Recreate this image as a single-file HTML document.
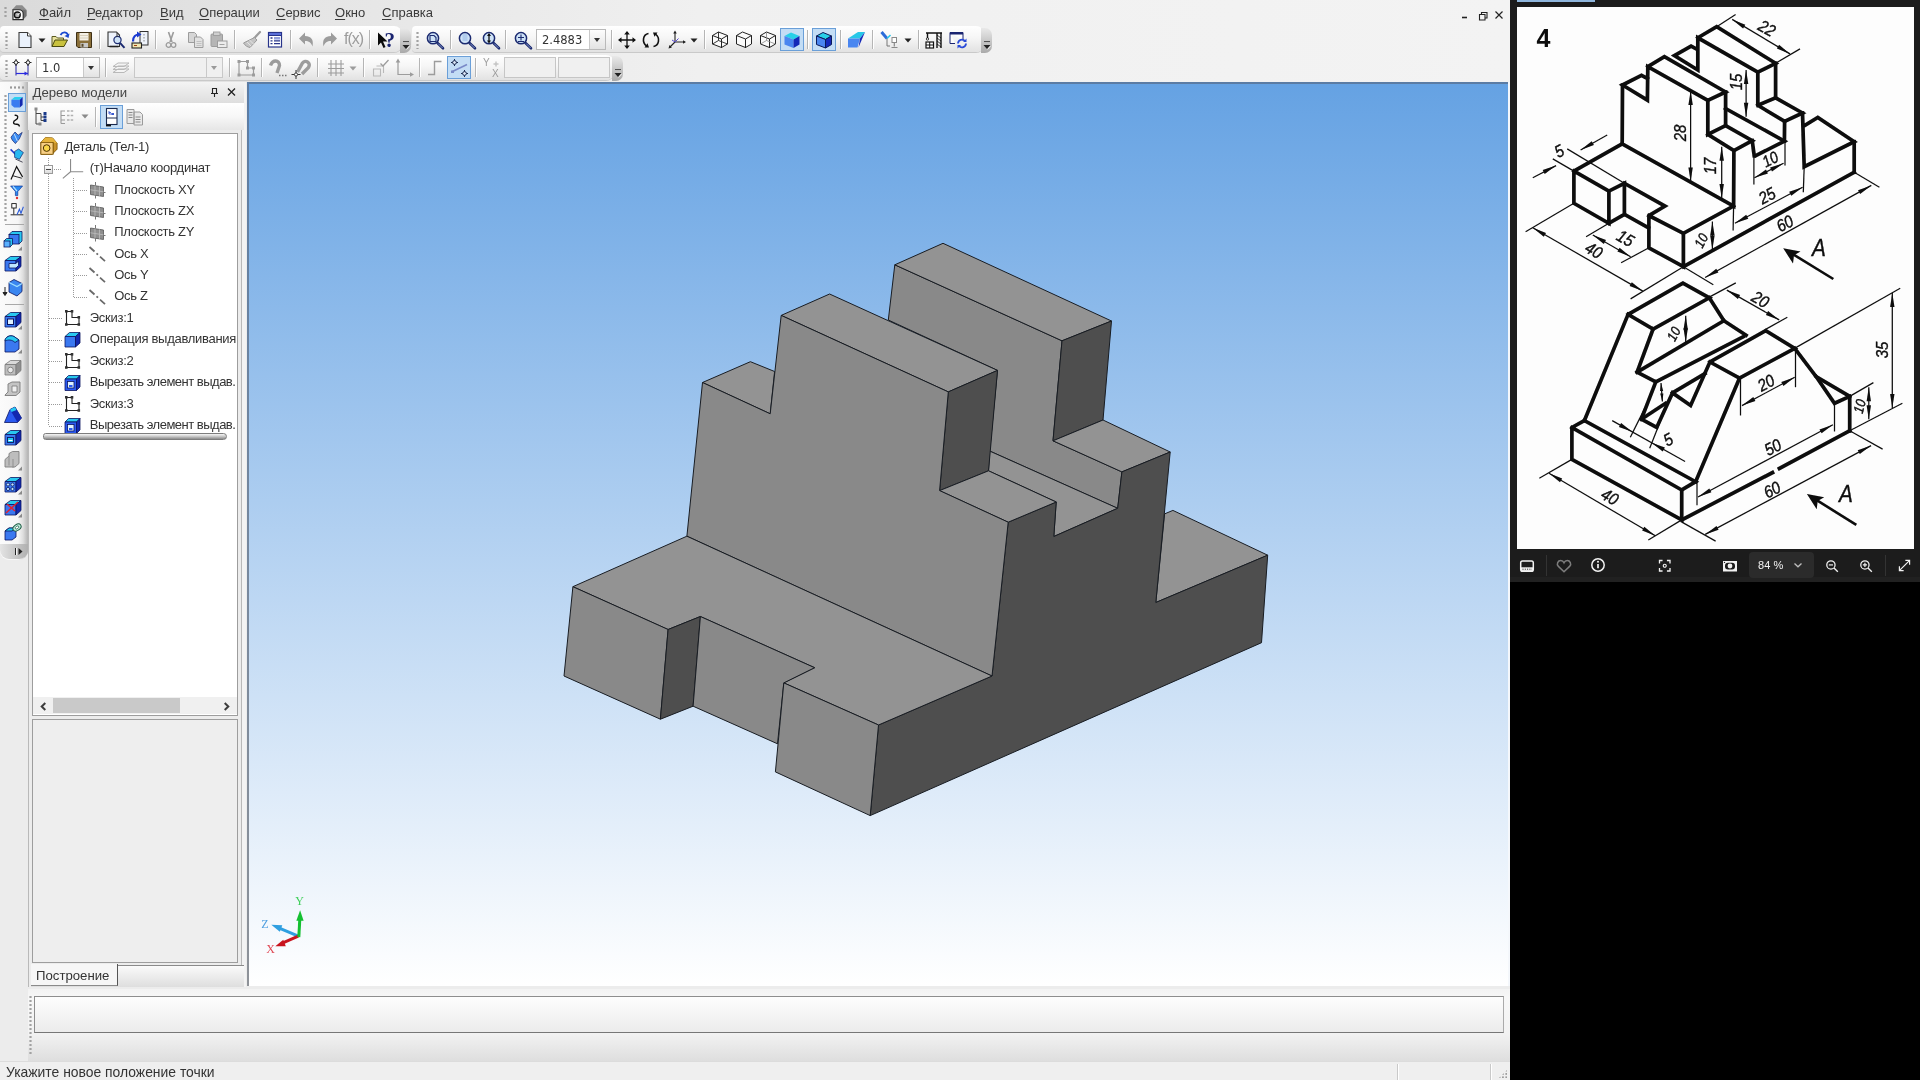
<!DOCTYPE html>
<html lang="ru">
<head>
<meta charset="utf-8">
<title>КОМПАС-3D</title>
<style>
*{box-sizing:border-box;margin:0;padding:0}
html,body{width:1920px;height:1080px;overflow:hidden;background:#000}
body{position:relative;font-family:"Liberation Sans","DejaVu Sans",sans-serif;font-size:13px;color:#2a2a2a}
.abs{position:absolute}
svg{overflow:visible}
#cad{will-change:transform;position:absolute;left:0;top:0;width:1510px;height:1080px;background:#ececec;overflow:hidden}
#menubar{position:absolute;left:0;top:0;width:1510px;height:82px;background:linear-gradient(90deg,#dadada 0,#e5e5e5 300px,#f0f0f0 700px,#f3f3f3 100%)}
#menubar span{position:absolute;top:5px;font-size:13px;line-height:15px;color:#3a3a3a;white-space:nowrap}
#menubar span u{text-decoration:underline;text-underline-offset:2px}
.grip{position:absolute;width:3px;background-image:radial-gradient(circle,#a2a2a2 1px,transparent 1.3px);background-size:3px 4px}
.tb{position:absolute;height:27px;border-radius:4px 8px 8px 4px;background:linear-gradient(180deg,#ffffff 0,#f6f6f6 45%,#e2e2e2 100%);box-shadow:0 1px 0 #c9c9c9}
.tbend{position:absolute;top:2px;width:11px;height:25px;border-radius:0 7px 7px 0;background:linear-gradient(180deg,#e9e9e9 0,#a9a9a9 100%)}
.sep{position:absolute;width:1px;height:19px;background:#b5b5b5;box-shadow:1px 0 0 #fff}
.ico{position:absolute;width:20px;height:20px}
.combo{position:absolute;height:21px;background:#fff;border:1px solid #b9b9b9;font-family:"DejaVu Sans","Liberation Sans",sans-serif;font-size:11.5px;line-height:21px;padding-left:5px;color:#333}
.combo.dis{background:#f0f0f0;border-color:#c8c8c8}
.cbtn{position:absolute;right:0;top:0;width:16px;height:19px;border-left:1px solid #c9c9c9;background:linear-gradient(180deg,#fdfdfd,#e3e3e3)}
.cbtn:after,.dd:after{content:"";position:absolute;left:4px;top:8px;border:3.5px solid transparent;border-top:4px solid #333}
.combo.dis .cbtn:after{border-top-color:#9a9a9a}
.dd{position:absolute;width:12px;height:20px}
.dd:after{left:2px;top:9px}
#lefttb{position:absolute;left:0;top:82px;width:28px;height:478px;background:linear-gradient(90deg,#fbfbfb 0,#f6f6f6 18px,#dedede 23px,#b4b4b4 28px);border-radius:0 0 9px 9px}
#panel{position:absolute;left:28px;top:82px;width:218px;height:905px;background:#ececec}
#ptitle{position:absolute;left:0;top:0;width:216px;height:21px;background:linear-gradient(180deg,#f4f4f4,#dedede);font-size:13.2px;line-height:21px;color:#444;padding-left:4.500px}
#tree{position:absolute;left:4px;top:51px;width:206px;height:583px;background:#fff;border:1px solid #9d9d9d;overflow:hidden}
.tr{position:absolute;left:0;height:21px;font-size:13px;letter-spacing:-0.28px;line-height:21px;white-space:nowrap;color:#333}
#lower{position:absolute;left:4px;top:637px;width:206px;height:243.5px;background:#eeeeee;border:1px solid #9d9d9d}
#vp{position:absolute;left:249px;top:84px;width:1259px;height:901.5px;background:linear-gradient(180deg,#65a2e3 0,#ffffff 100%);overflow:hidden}
#vpb{position:absolute;left:247px;top:82px;width:1261px;height:903.5px;background:linear-gradient(180deg,#5b7ca4 0,#8e9298 100%)}
#bottom{position:absolute;left:28px;top:989px;width:1482px;height:72px;background:linear-gradient(180deg,#f3f3f3 0,#f7f7f7 12%,#f2f2f2 62%,#dedede 100%)}
#prop{position:absolute;left:6px;top:7px;width:1470px;height:37px;border:1px solid #8e8e8e;border-right-color:#aaa;border-bottom-color:#777;background:linear-gradient(180deg,#fdfdfd,#ececec)}
#status{position:absolute;left:0;top:1061px;width:1510px;height:19px;background:#efefef;border-top:1px solid #dcdcdc;font-size:13.9px;line-height:20px;color:#333;padding-left:6px}
#viewer{will-change:transform;position:absolute;left:1510px;top:0;width:410px;height:582px;background:#1c1c1c}
#paper{position:absolute;left:7px;top:7px;width:397px;height:541.5px;background:#fdfdfd;overflow:hidden}
</style>
</head>
<body>
<div id="cad">
<div id="menubar">
<div class="grip" style="left:4px;top:6px;height:12px"></div>
<svg class="abs" style="left:11px;top:4px" width="18" height="18" viewBox="11 4 18 18"><path d="M12.6 9.200l3.600-3.900h6l4.500 4.600v6.200l-3.900 4h-10.200z" fill="#8d8d8d"/><path d="M22.800 9.500l3.500 1v5.300l-3.300 3.600z" fill="#6f6f6f"/><path d="M13 9.700h6a4.200 4.200 0 0 1 4.200 4.200v5.700h-10.200z" fill="#fbfbfb" stroke="#2a2a2a" stroke-width="1.100"/><circle cx="17.300" cy="14.900" r="2.900" fill="#b5b5b5" stroke="#111" stroke-width="1.400"/><path d="M17.500 14.700l2.300-1.200" stroke="#fff" stroke-width="1"/></svg>
<span style="left:39px"><u>Ф</u>айл</span>
<span style="left:87px"><u>Р</u>едактор</span>
<span style="left:160px"><u>В</u>ид</span>
<span style="left:199px"><u>О</u>перации</span>
<span style="left:276px"><u>С</u>ервис</span>
<span style="left:335px"><u>О</u>кно</span>
<span style="left:382px"><u>С</u>правка</span>
<svg class="abs" style="left:1458px;top:8px" width="52" height="16" viewBox="0 0 52 16"><path d="M4 9.5h5" stroke="#222" stroke-width="1.6"/><path d="M21.5 6.5h5.5v5.5h-5.5z M23.5 6.5v-2h5.5v5.5h-2" fill="none" stroke="#222" stroke-width="1.1"/><path d="M37.5 3.5l7 7M44.5 3.5l-7 7" stroke="#222" stroke-width="1.2"/></svg>
</div>
<div class="tb" style="left:0;top:26px;width:402px;height:26px"></div>
<div class="tb" style="left:412px;top:26px;width:572px;height:26px"></div>
<div class="tb" style="left:0;top:55px;width:614px;height:25px"></div>
<div class="tbend" style="left:400px;top:28px"></div>
<svg class="abs" style="left:402px;top:41px" width="8" height="9" viewBox="0 0 8 9"><path d="M1 1.5h6" stroke="#fff" stroke-width="1"/><path d="M1 0.8h6" stroke="#222" stroke-width="1"/><path d="M0.5 4h7L4 8z" fill="#222"/><path d="M4.6 8.4 L7.9 4.6" stroke="#fff" stroke-width=".8"/></svg>
<div class="tbend" style="left:981px;top:28px"></div>
<svg class="abs" style="left:983px;top:41px" width="8" height="9" viewBox="0 0 8 9"><path d="M1 1.5h6" stroke="#fff" stroke-width="1"/><path d="M1 0.8h6" stroke="#222" stroke-width="1"/><path d="M0.5 4h7L4 8z" fill="#222"/><path d="M4.6 8.4 L7.9 4.6" stroke="#fff" stroke-width=".8"/></svg>
<div class="tbend" style="left:612px;top:56px"></div>
<svg class="abs" style="left:614px;top:69px" width="8" height="9" viewBox="0 0 8 9"><path d="M1 1.5h6" stroke="#fff" stroke-width="1"/><path d="M1 0.8h6" stroke="#222" stroke-width="1"/><path d="M0.5 4h7L4 8z" fill="#222"/><path d="M4.6 8.4 L7.9 4.6" stroke="#fff" stroke-width=".8"/></svg>
<div class="grip" style="left:5px;top:31px;height:18px"></div>
<div class="grip" style="left:416px;top:31px;height:18px"></div>
<div class="grip" style="left:5px;top:59px;height:18px"></div>
<svg class="abs" style="left:14.5px;top:29.5px" width="20" height="20" viewBox="-10 -10 20 20"><path d="M-6 -7.5h8.5l3.5 3.5v11.5h-12z" fill="#eaf1fb" stroke="#3a3a3a" stroke-width="1.1"/><path d="M2.5 -7.5v3.5h3.5" fill="#fff" stroke="#3a3a3a" stroke-width="1"/></svg>
<svg class="abs" style="left:38px;top:37.5px" width="8" height="5" viewBox="0 0 8 5"><path d="M0.5 0.5h7L4 4.5z" fill="#222"/></svg>
<svg class="abs" style="left:50.0px;top:29.5px" width="20" height="20" viewBox="-10 -10 20 20"><path d="M-8 6.5v-10h4l1.5 1.5h6v3" fill="#e8e2a0" stroke="#5a5a20" stroke-width="1"/><path d="M-8 6.5l3-6.5h12.5l-3.5 6.5z" fill="#c9c23e" stroke="#4a4a10" stroke-width="1"/><path d="M0.5 -5c2-3.5 6-3.5 7.5 0" fill="none" stroke="#1a4ad0" stroke-width="1.8"/><path d="M9.5 -6.5l-1 4.5-4-2z" fill="#1a4ad0"/></svg>
<svg class="abs" style="left:73.5px;top:29.5px" width="20" height="20" viewBox="-10 -10 20 20"><path d="M-7.5 -7.5h15v15h-13.5l-1.5-1.5z" fill="#8a6f3a" stroke="#3e3016" stroke-width="1"/><rect x="-4.5" y="-7" width="9" height="7.5" fill="#f4f0e6"/><path d="M-4.5 -4.5h9M-4.5 -2h9" stroke="#cfc7b0" stroke-width=".8"/><rect x="-3.5" y="3" width="7.5" height="4.5" fill="#c9c9c9"/><rect x="-2.5" y="3.8" width="2" height="3" fill="#5a4a2a"/></svg>
<div class="sep" style="left:99px;top:30px"></div>
<svg class="abs" style="left:105.5px;top:29.5px" width="20" height="20" viewBox="-10 -10 20 20"><path d="M-8 -8h8.5l3 3v11.5h-11.5z" fill="#eef3fb" stroke="#333" stroke-width="1.1"/><path d="M-6.5 6.5h9" stroke="#222" stroke-width="1.6"/><circle cx="1.5" cy="0" r="3.6" fill="#cfe3f7" stroke="#1b2a70" stroke-width="1.2"/><path d="M4 2.8l4.5 5" stroke="#1b2a70" stroke-width="2"/><path d="M1 -7v4" stroke="#333" stroke-width="1"/></svg>
<svg class="abs" style="left:129.5px;top:29.5px" width="20" height="20" viewBox="-10 -10 20 20"><rect x="0" y="-8.5" width="8" height="13.5" fill="#eef3fb" stroke="#333" stroke-width="1"/><path d="M4 -6v8" stroke="#8a8a8a" stroke-width="1" stroke-dasharray="1.5 1.5"/><path d="M-7 1.5c0-5 3-7 6-7" fill="none" stroke="#1a3ad0" stroke-width="2.2"/><path d="M-3 -8.5l4.5 3-4.5 3z" fill="#1a3ad0"/><rect x="-8" y="3" width="9.5" height="5" fill="#f0e6b0" stroke="#222" stroke-width="1.1"/><path d="M-6 5.5h3" stroke="#a04010" stroke-width="1"/></svg>
<div class="sep" style="left:155px;top:30px"></div>
<svg class="abs" style="left:161.0px;top:29.5px" width="20" height="20" viewBox="-10 -10 20 20"><path d="M-2.5 -8l3.5 10M2.5 -8l-3.5 10" stroke="#9c9c9c" stroke-width="1.6"/><circle cx="-2.5" cy="5" r="2.3" fill="none" stroke="#9c9c9c" stroke-width="1.3"/><circle cx="2.5" cy="5" r="2.3" fill="none" stroke="#9c9c9c" stroke-width="1.3"/></svg>
<svg class="abs" style="left:186.0px;top:29.5px" width="20" height="20" viewBox="-10 -10 20 20"><path d="M-7.5 -7.5h6l2 2v8h-8z" fill="#d6d6d6" stroke="#9c9c9c" stroke-width="1"/><path d="M-1.5 -3h6l2.500 2.500v8h-8.500z" fill="#e2e2e2" stroke="#9c9c9c" stroke-width="1"/><path d="M0.500 1.500h5M0.500 3.500h5M0.500 5.500h5" stroke="#b9b9b9" stroke-width=".8"/></svg>
<svg class="abs" style="left:208.5px;top:29.5px" width="20" height="20" viewBox="-10 -10 20 20"><rect x="-8" y="-6" width="11.5" height="12.5" rx="1" fill="#b5b5b5" stroke="#9c9c9c" stroke-width="1"/><rect x="-5.5" y="-8" width="6.500" height="3.500" fill="#cfcfcf" stroke="#9c9c9c" stroke-width=".9"/><rect x="-1.500" y="1" width="9.500" height="6.500" fill="#ececec" stroke="#9c9c9c" stroke-width="1"/><path d="M0.500 4.500h5" stroke="#9c9c9c" stroke-width=".9"/></svg>
<div class="sep" style="left:234px;top:30px"></div>
<svg class="abs" style="left:241.5px;top:29.5px" width="20" height="20" viewBox="-10 -10 20 20"><path d="M8 -8l-6.500 7" stroke="#9c9c9c" stroke-width="2.200" stroke-linecap="round"/><path d="M2.500 -2.500l2.500 2.500-7 7.500c-2.500-.5-4.500-1.500-6.500-4.500z" fill="#c4c4c4" stroke="#9c9c9c" stroke-width="1"/><path d="M-5 2l4 4M-2.500 0l4 4" stroke="#e8e8e8" stroke-width=".9"/></svg>
<svg class="abs" style="left:264.5px;top:29.5px" width="20" height="20" viewBox="-10 -10 20 20"><rect x="-6.500" y="-7.500" width="13" height="14.500" fill="#fff" stroke="#28348a" stroke-width="1.200"/><rect x="-6.500" y="-7.500" width="13" height="3" fill="#5a6ed8" stroke="#28348a" stroke-width="1"/><path d="M-4.500 -2h2M-4.500 0.800h2M-4.500 3.600h2M-1 -2h6M-1 0.800h6M-1 3.600h6" stroke="#28348a" stroke-width="1.300"/><rect x="-1" y="-3" width="6" height="3" fill="#aab6f0" opacity=".7"/></svg>
<div class="sep" style="left:290px;top:30px"></div>
<svg class="abs" style="left:297.0px;top:29.5px" width="20" height="20" viewBox="-10 -10 20 20"><path d="M-8 -1.500l6-6v3.500c6 0 9 3.500 7.500 10.500-1.500-4-3.500-5.500-7.500-5.500v3.500z" fill="#9c9c9c"/></svg>
<svg class="abs" style="left:319.0px;top:29.5px" width="20" height="20" viewBox="-10 -10 20 20"><path d="M8 -1.500l-6-6v3.500c-6 0-9 3.500-7.500 10.500 1.500-4 3.500-5.500 7.500-5.500v3.500z" fill="#9c9c9c"/></svg>
<div class="abs" style="left:344px;top:30px;font-size:16px;line-height:18px;color:#9c9c9c;letter-spacing:-1px">f(x)</div>
<div class="sep" style="left:369px;top:30px"></div>
<svg class="abs" style="left:375.5px;top:29.5px" width="20" height="20" viewBox="-10 -10 20 20"><path d="M-8 -7.500v13l3-3 2.500 5.500 2-1-2.500-5.500h4.500z" fill="#0a0a0a"/><text x="-1.500" y="6.500" font-family="Liberation Serif,serif" font-weight="bold" font-size="21" fill="#1a2470">?</text></svg>
<svg class="abs" style="left:424.5px;top:29.5px" width="20" height="20" viewBox="-10 -10 20 20"><path d="M2.5 3 L8 8.3" stroke="#1b2a70" stroke-width="2.6" stroke-linecap="round"/><path d="M3.2 3.6 L7.6 8" stroke="#8f9fd0" stroke-width=".9"/><circle cx="-2" cy="-1.8" r="5.6" fill="#cfe3f7" stroke="#1b2a70" stroke-width="1.5"/><path d="M-5 -4.500h4l2 2v4h-6z" fill="none" stroke="#1b2a70" stroke-width="1.100"/></svg>
<div class="sep" style="left:450px;top:30px"></div>
<svg class="abs" style="left:456.5px;top:29.5px" width="20" height="20" viewBox="-10 -10 20 20"><path d="M2.5 3 L8 8.3" stroke="#1b2a70" stroke-width="2.6" stroke-linecap="round"/><path d="M3.2 3.6 L7.6 8" stroke="#8f9fd0" stroke-width=".9"/><circle cx="-2" cy="-1.8" r="5.6" fill="#cfe3f7" stroke="#1b2a70" stroke-width="1.5"/><rect x="-4.500" y="-6" width="5" height="7" fill="#a9c6ea" opacity=".8"/></svg>
<svg class="abs" style="left:480.5px;top:29.5px" width="20" height="20" viewBox="-10 -10 20 20"><path d="M2.5 3 L8 8.3" stroke="#1b2a70" stroke-width="2.6" stroke-linecap="round"/><path d="M3.2 3.6 L7.6 8" stroke="#8f9fd0" stroke-width=".9"/><circle cx="-2" cy="-1.8" r="5.6" fill="#cfe3f7" stroke="#1b2a70" stroke-width="1.5"/><path d="M-2 -5.500v7.500" stroke="#111" stroke-width="1.300"/><path d="M-2 -7l2 3h-4zM-2 3.500l2-3h-4z" fill="#111"/></svg>
<div class="sep" style="left:505px;top:30px"></div>
<svg class="abs" style="left:512.5px;top:29.5px" width="20" height="20" viewBox="-10 -10 20 20"><path d="M2.5 3 L8 8.3" stroke="#1b2a70" stroke-width="2.6" stroke-linecap="round"/><path d="M3.2 3.6 L7.6 8" stroke="#8f9fd0" stroke-width=".9"/><circle cx="-2" cy="-1.8" r="5.6" fill="#cfe3f7" stroke="#1b2a70" stroke-width="1.5"/><path d="M-5 -2.500h6M-2 -5.500v6M-5 1.500h6" stroke="#1b2a70" stroke-width="1.100"/></svg>
<div class="combo" style="left:536px;top:29px;width:70px">2.4883<div class="cbtn"></div></div>
<div class="sep" style="left:611px;top:30px"></div>
<svg class="abs" style="left:617.0px;top:29.5px" width="20" height="20" viewBox="-10 -10 20 20"><path d="M-8 0h16M0 -8v16" stroke="#111" stroke-width="1.300"/><path d="M-9 0l3.500-2.800v5.600zM9 0l-3.500-2.800v5.600zM0 -9l-2.800 3.500h5.600zM0 9l-2.800-3.500h5.600z" fill="#111"/></svg>
<svg class="abs" style="left:641.0px;top:29.5px" width="20" height="20" viewBox="-10 -10 20 20"><path d="M-2.500 -6.500c-5.500 1-7 8.500-2 12.500" fill="none" stroke="#111" stroke-width="1.600"/><path d="M2.500 6.500c5.500-1 7-8.500 2-12.500" fill="none" stroke="#111" stroke-width="1.600"/><path d="M-6.500 7.500l4.500 0-1.500-4.300z M6.500 -7.500l-4.500 0 1.500 4.300z" fill="#111"/></svg>
<svg class="abs" style="left:667.0px;top:29.5px" width="20" height="20" viewBox="-10 -10 20 20"><path d="M-2 2v-10M-2 2h9.500M-2 2l-5.500 5.500" stroke="#222" stroke-width="1.100" fill="none"/><path d="M-2 -9.500l-1.800 3h3.600zM9 2l-3-1.800v3.600zM-8.500 8.500l1-3.400 2.400 2.400z" fill="#222"/><path d="M-2 2l3.500-3.500M-2 2l-3 -2" stroke="#5a4ad0" stroke-width="1"/></svg>
<svg class="abs" style="left:690px;top:37.5px" width="8" height="5" viewBox="0 0 8 5"><path d="M0.5 0.5h7L4 4.5z" fill="#222"/></svg>
<div class="sep" style="left:704px;top:30px"></div>
<svg class="abs" style="left:710.0px;top:29.5px" width="20" height="20" viewBox="-10 -10 20 20"><path d="M-7.500 -4.500l6-3.500 9 3.500v8.500l-6 3.500-9-3.500z" fill="#fbfbfb" stroke="#222" stroke-width="1"/><path d="M-7.500 -4.500l9 3.500 6-3.500M1.500 -1v9" fill="none" stroke="#222" stroke-width="1"/><path d="M-1.500 -8v8.500l-6 3.500M-1.500 0.500l9 3.500" fill="none" stroke="#222" stroke-width=".9"/></svg>
<svg class="abs" style="left:734.0px;top:29.5px" width="20" height="20" viewBox="-10 -10 20 20"><path d="M-7.500 -4.500l6-3.500 9 3.500v8.500l-6 3.500-9-3.500z" fill="#fbfbfb" stroke="#222" stroke-width="1"/><path d="M-7.500 -4.500l9 3.500 6-3.500M1.500 -1v9" fill="none" stroke="#222" stroke-width="1"/></svg>
<svg class="abs" style="left:758.0px;top:29.5px" width="20" height="20" viewBox="-10 -10 20 20"><path d="M-7.500 -4.500l6-3.500 9 3.500v8.500l-6 3.500-9-3.500z" fill="#fbfbfb" stroke="#222" stroke-width="1"/><path d="M-7.500 -4.500l9 3.500 6-3.500M1.500 -1v9" fill="none" stroke="#222" stroke-width="1"/><path d="M-1.500 -8v8.500l-6 3.500M-1.500 0.500l9 3.500" fill="none" stroke="#888" stroke-width=".8"/></svg>
<div class="abs" style="left:780px;top:28px;width:24px;height:23px;background:#c3ddf5;border:1px solid #6a9fd8"></div>
<svg class="abs" style="left:782.0px;top:29.5px" width="20" height="20" viewBox="-10 -10 20 20"><path d="M-7.500 -4l6.500-3.500 8.500 3.500-6 3.500z" fill="#28d0e8"/><path d="M-7.500 -4l9 3.500v8.500l-9-3.500z" fill="#4a86f0"/><path d="M1.500 -0.500l6-3.500v8.500l-6 3.500z" fill="#1428b8"/></svg>
<div class="sep" style="left:807px;top:30px"></div>
<div class="abs" style="left:812px;top:28px;width:24px;height:23px;background:#c3ddf5;border:1px solid #6a9fd8"></div>
<svg class="abs" style="left:814.0px;top:29.5px" width="20" height="20" viewBox="-10 -10 20 20"><path d="M-7.500 -4l6.500-3.500 8.500 3.500-6 3.500z" fill="#28d0e8" stroke="#0a1a5a" stroke-width="1"/><path d="M-7.500 -4l9 3.500v8.500l-9-3.500z" fill="#4a86f0" stroke="#0a1a5a" stroke-width="1"/><path d="M1.500 -0.500l6-3.500v8.500l-6 3.500z" fill="#1428b8" stroke="#0a1a5a" stroke-width="1"/></svg>
<div class="sep" style="left:840px;top:30px"></div>
<svg class="abs" style="left:846.0px;top:29.5px" width="20" height="20" viewBox="-10 -10 20 20"><path d="M-8 -1.500l10-6.500h7l-5 6.500z" fill="#28c8e8"/><path d="M-8 -1.500h12l-2.500 9h-9.500z" fill="#4a86f0"/><path d="M4 -1.500l5-6.500-6.500 15.500z" fill="#1428b8"/></svg>
<div class="sep" style="left:872px;top:30px"></div>
<svg class="abs" style="left:880.0px;top:29.5px" width="20" height="20" viewBox="-10 -10 20 20"><path d="M-8.500 -8l5.500 6.500" stroke="#2a6ad8" stroke-width="3"/><path d="M-3 -1.500l3.500-3.500" stroke="#28c8e8" stroke-width="1.600"/><path d="M-3 -1.500v7.500h3" stroke="#777" stroke-width="1" fill="none"/><rect x="2" y="-2.500" width="4.500" height="5" fill="#fff" stroke="#888" stroke-width="1"/><path d="M4.300 2.500v4M1.500 7.500h6" stroke="#888" stroke-width="1.200"/></svg>
<svg class="abs" style="left:904px;top:37.5px" width="8" height="5" viewBox="0 0 8 5"><path d="M0.5 0.5h7L4 4.5z" fill="#222"/></svg>
<div class="sep" style="left:918px;top:30px"></div>
<svg class="abs" style="left:924.0px;top:29.5px" width="20" height="20" viewBox="-10 -10 20 20"><path d="M-8 -7h16M-6.500 -7v5M3 -7v15M7 -7v15" stroke="#111" stroke-width="1.400" fill="none"/><path d="M3 -5l4 3M3 -2l4 3M3 1l4 3M3 4l4 3" stroke="#111" stroke-width=".8"/><rect x="-8" y="2" width="7.500" height="6" fill="#fff" stroke="#111" stroke-width="1.200"/><path d="M-8 5h7.500M-4.300 2v6" stroke="#111" stroke-width="1"/><circle cx="-6.500" cy="-1" r="1.200" fill="none" stroke="#111" stroke-width=".8"/></svg>
<svg class="abs" style="left:947.5px;top:29.5px" width="20" height="20" viewBox="-10 -10 20 20"><path d="M-8 -7.500h13v8M-8 -7.500v11h5" fill="#fdfdfd" stroke="#1a2470" stroke-width="1"/><rect x="-8" y="-8" width="13" height="2.500" fill="#1a2470"/><path d="M0 3.500a4 4 0 0 1 7-2.500M8 3.500a4 4 0 0 1-7 2.500" fill="none" stroke="#2a4ad8" stroke-width="1.800"/><path d="M8.500 -1.500v3.500h-3.500zM-0.500 8.500v-3.500h3.500z" fill="#2a4ad8"/></svg>
<svg class="abs" style="left:12.0px;top:57.5px" width="20" height="20" viewBox="-10 -10 20 20"><path d="M-6 -5.500v13M6 -5.500v13" stroke="#3a3aa0" stroke-width="1.100"/><path d="M-6 5.500h12" stroke="#2a2ae0" stroke-width="1.200"/><path d="M6 5.500l-3.500-2v4z" fill="#2a2ae0"/><path d="M-9.500 -5.500h7M-6 -9v7M2.500 -5.500h7M6 -9v7" stroke="#222" stroke-width="1"/><circle cx="-6" cy="-5.500" r="1.800" fill="#fff" stroke="#222" stroke-width="1"/><circle cx="6" cy="-5.500" r="1.800" fill="#fff" stroke="#222" stroke-width="1"/></svg>
<div class="combo" style="left:36px;top:57px;width:64px">1.0<div class="cbtn"></div></div>
<div class="sep" style="left:105px;top:58px"></div>
<svg class="abs" style="left:111.0px;top:57.5px" width="20" height="20" viewBox="-10 -10 20 20"><path d="M-8 1.500l5-3.500h11l-5 3.500zM-8 4.500l5-3.500h11l-5 3.500zM-8 -1.500l5-3.500h11l-5 3.500z" fill="#f4f4f4" stroke="#b9b9b9" stroke-width="1"/></svg>
<div class="combo dis" style="left:134px;top:57px;width:89px"><div class="cbtn" style="background:#f0f0f0"></div></div>
<div class="sep" style="left:229px;top:58px"></div>
<svg class="abs" style="left:235.5px;top:57.5px" width="20" height="20" viewBox="-10 -10 20 20"><path d="M-7 -6.500h8.500v6.500h6v7h-14.500z" fill="none" stroke="#9c9c9c" stroke-width="1.200"/><g fill="#9c9c9c"><rect x="-8.500" y="-8" width="3" height="3"/><rect x="0" y="-8" width="3" height="3"/><rect x="0" y="-1.500" width="3" height="3"/><rect x="6" y="-1.500" width="3" height="3"/><rect x="6" y="5.500" width="3" height="3"/><rect x="-8.500" y="5.500" width="3" height="3"/></g></svg>
<div class="sep" style="left:261px;top:58px"></div>
<svg class="abs" style="left:267.5px;top:57.5px" width="20" height="20" viewBox="-10 -10 20 20"><path d="M-7.500 -2.500c2-6 9-6 9 0l-2.500 7.500" fill="none" stroke="#9c9c9c" stroke-width="3.400"/><path d="M1 7.500h1.500M4 7.500h1.500M7 7.500h1.500" stroke="#777" stroke-width="1.400"/></svg>
<svg class="abs" style="left:291.5px;top:57.5px" width="20" height="20" viewBox="-10 -10 20 20"><path d="M-4.500 4l5-9c3-4 9 0 6 4.500l-6.500 6.500" fill="none" stroke="#9c9c9c" stroke-width="3.400"/><path d="M-6 2v9M-10.500 6.500h9" stroke="#333" stroke-width="1"/><circle cx="-6" cy="6.500" r="1.600" fill="#fff" stroke="#333" stroke-width=".9"/></svg>
<div class="sep" style="left:317px;top:58px"></div>
<svg class="abs" style="left:325.5px;top:57.5px" width="20" height="20" viewBox="-10 -10 20 20"><path d="M-8 -4h16M-8 0.500h16M-8 5h16M-5 -8v16M0 -8v16M5 -8v16" stroke="#9c9c9c" stroke-width="1.100"/></svg>
<svg class="abs" style="left:349px;top:65.500px" width="8" height="5" viewBox="0 0 8 5"><path d="M0.500 0.500h7L4 4.500z" fill="#9c9c9c"/></svg>
<div class="sep" style="left:363px;top:58px"></div>
<svg class="abs" style="left:369.5px;top:57.5px" width="20" height="20" viewBox="-10 -10 20 20"><path d="M-6.500 1h7v7h-7zM-3.500 -2h7v7" fill="none" stroke="#b9b9b9" stroke-width="1.100"/><path d="M0.500 -4.500l2.500 2.500 5.500-6" fill="none" stroke="#9c9c9c" stroke-width="1.300"/></svg>
<svg class="abs" style="left:393.5px;top:57.5px" width="20" height="20" viewBox="-10 -10 20 20"><path d="M-6 -8v14.500h14.500" fill="none" stroke="#9c9c9c" stroke-width="1.200"/><path d="M-6 -9.500l-2.300 4h4.600zM10 6.500l-4-2.300v4.600z" fill="#9c9c9c"/></svg>
<div class="sep" style="left:419px;top:58px"></div>
<svg class="abs" style="left:425.0px;top:57.5px" width="20" height="20" viewBox="-10 -10 20 20"><path d="M-7 6.500h6.500v-13h7" fill="none" stroke="#9c9c9c" stroke-width="1.400"/></svg>
<div class="abs" style="left:447px;top:56px;width:24px;height:23px;background:#c3ddf5;border:1px solid #6a9fd8"></div>
<svg class="abs" style="left:449.5px;top:57.5px" width="20" height="20" viewBox="-10 -10 20 20"><path d="M-7.500 3.500l14.500-7" stroke="#7a8ac8" stroke-width="1.600"/><rect x="-9" y="2.500" width="3" height="2.500" fill="#7a8ac8"/><path d="M-5.500 -9v7M-9 -5.500h7M4.500 2v7M1 5.500h7" stroke="#1a2a50" stroke-width="1"/><circle cx="-5.500" cy="-5.500" r="1.900" fill="#dfe9f8" stroke="#1a2a50" stroke-width="1"/><circle cx="4.500" cy="5.500" r="1.900" fill="#dfe9f8" stroke="#1a2a50" stroke-width="1"/></svg>
<div class="sep" style="left:475px;top:58px"></div>
<div class="abs" style="left:483px;top:58px;font-size:10px;line-height:10px;color:#9c9c9c">Y</div><div class="abs" style="left:492px;top:69px;font-size:10px;line-height:10px;color:#9c9c9c">X</div>
<svg class="abs" style="left:490.0px;top:57.5px" width="12" height="12" viewBox="-10 -10 20 20"><path d="M-4.500 0h9M0 -4.500v9" stroke="#9c9c9c" stroke-width="1"/><circle cx="0" cy="0" r="1.700" fill="#fff" stroke="#9c9c9c" stroke-width="1"/></svg>
<div class="abs" style="left:504px;top:57px;width:52px;height:21px;background:#f0f0f0;border:1px solid #c6c6c6"></div>
<div class="abs" style="left:558px;top:57px;width:52px;height:21px;background:#f0f0f0;border:1px solid #c6c6c6"></div>

<div id="lefttb"><div class="abs" style="left:9px;top:4px;width:16px;height:3px;background-image:radial-gradient(circle,#9a9a9a 1px,transparent 1.300px);background-size:4px 3px"></div>
<div class="grip" style="left:4px;top:12px;height:128px"></div>
<div class="abs" style="left:8px;top:11px;width:18px;height:19px;background:#c3ddf5;border:1px solid #6a9fd8"></div>
<svg class="abs" style="left:8.5px;top:12.5px" width="16" height="16" viewBox="-10 -10 20 20"><path d="M-7 -4l4-3.500h10l-3.500 3.500z" fill="#28d0f0"/><path d="M-7 -4h10.500v9.500h-7l-3.500-3z" fill="#3a7cf0"/><path d="M3.500 -4l3.500-3.500v10l-3.500 3z" fill="#1228b0"/></svg>
<svg class="abs" style="left:8.5px;top:30.5px" width="16" height="16" viewBox="-10 -10 20 20"><path d="M-3 -7c5-1 5 4 1.500 5.500s-4.500 6 1.500 5.500c2 0 3 1.500 3 3" fill="none" stroke="#111" stroke-width="1.700"/></svg>
<svg class="abs" style="left:8.5px;top:47.5px" width="16" height="16" viewBox="-10 -10 20 20"><path d="M-7.500 -1l5-6.500 4 4 5-3.500-3.500 8-5 6-4-4.500z" fill="#3a8af0" stroke="#0a1460" stroke-width=".8"/><path d="M-3.500 -5l4 9" stroke="#bfe0ff" stroke-width="1.200"/></svg>
<svg class="abs" style="left:8.5px;top:64.5px" width="16" height="16" viewBox="-10 -10 20 20"><path d="M-8 -7l6 6" stroke="#1a3ad0" stroke-width="2"/><path d="M-3 -4.500l5-3 6 4.500-5 8.500-6-2.500z" fill="#28b8f0" stroke="#0a1460" stroke-width=".8"/><path d="M-2 5l9 4" stroke="#223" stroke-width="1"/></svg>
<svg class="abs" style="left:8.5px;top:82.5px" width="16" height="16" viewBox="-10 -10 20 20"><path d="M-7.500 8l7-16 7.500 13" fill="none" stroke="#111" stroke-width="1.500"/><path d="M-5 3.500l11 3" stroke="#111" stroke-width="1.100"/></svg>
<svg class="abs" style="left:8.5px;top:101.5px" width="16" height="16" viewBox="-10 -10 20 20"><path d="M-8 -7.500h15l-6 7v5h-3v-5z" fill="#2a8af0" stroke="#0a2a90" stroke-width=".8"/><path d="M-5 -7l5 6" stroke="#bfe6ff" stroke-width="1.500"/><circle cx="0" cy="7.500" r="1.500" fill="#e03030"/></svg>
<svg class="abs" style="left:8.5px;top:119.5px" width="16" height="16" viewBox="-10 -10 20 20"><rect x="-6.500" y="-8" width="5.500" height="5.500" fill="#fff" stroke="#111" stroke-width="1.100"/><path d="M-4 -2.500v8M-8 6h16" stroke="#111" stroke-width="1.100"/><path d="M0 6l3-7 2 5 3-8" fill="none" stroke="#2a5ad8" stroke-width="1.300"/></svg>
<div class="abs" style="left:5px;top:142px;width:19px;height:1px;background:#a9a9a9"></div>
<svg class="abs" style="left:3.0px;top:148.6px" width="20" height="20" viewBox="-10 -10 20 20"><path d="M-4 -6.500l3-3h10v9.500l-3 3z" fill="#28c8f0" stroke="#0a1460" stroke-width=".8"/><rect x="-4" y="-6.500" width="10" height="9.500" fill="#3a78f0" stroke="#0a1460" stroke-width=".8"/><path d="M-9 0l2.500-2.500h6v6l-2.500 2.500z" fill="#28c8f0" stroke="#0a1460" stroke-width=".8"/><rect x="-9" y="0" width="6" height="6" fill="#5ab0ff" stroke="#0a1460" stroke-width=".8"/><path d="M9 9.500v-4l-4 4z" fill="#8a8a8a"/></svg>
<svg class="abs" style="left:3.0px;top:171.5px" width="20" height="20" viewBox="-10 -10 20 20"><path d="M-8 -3.500l5.500-4h10.500l-5 4z" fill="#28c8f0" stroke="#0a1460" stroke-width=".8"/><path d="M-8 -3.500h11v10.500h-11z" fill="#3a78f0" stroke="#0a1460" stroke-width=".8"/><path d="M3 -3.500l5-4v10l-5 4.500z" fill="#1228b0" stroke="#0a1460" stroke-width=".8"/><path d="M-4 -0.500h7l2.500-2.500v4.500l-2.500 2.500h-7z" fill="#bfe6ff" stroke="#0a1460" stroke-width=".8"/></svg>
<svg class="abs" style="left:3.0px;top:195.5px" width="20" height="20" viewBox="-10 -10 20 20"><path d="M-4 -5.500l5-3 8 4v8l-5 4.500-8-4z" fill="#3a86f0" stroke="#0a1460" stroke-width=".8"/><path d="M-4 -5.500l8 4 5-3" fill="none" stroke="#9fe0ff" stroke-width="1.200"/><path d="M-8 -1v7M-8 7.500l-2-3h4z" stroke="#222" fill="#222" stroke-width="1"/></svg>
<div class="abs" style="left:5px;top:222px;width:19px;height:1px;background:#a9a9a9"></div>
<svg class="abs" style="left:3.0px;top:228.0px" width="20" height="20" viewBox="-10 -10 20 20"><path d="M-8 -3.500l5.500-4h10.500l-5 4z" fill="#28c8f0" stroke="#0a1460" stroke-width=".8"/><path d="M-8 -3.500h11v10.500h-11z" fill="#3a78f0" stroke="#0a1460" stroke-width=".8"/><path d="M3 -3.500l5-4v10l-5 4.500z" fill="#1228b0" stroke="#0a1460" stroke-width=".8"/><rect x="-5.500" y="-1" width="6" height="5.500" fill="#dff2ff" stroke="#0a1460" stroke-width="1"/><path d="M9 9.500v-4l-4 4z" fill="#8a8a8a"/></svg>
<svg class="abs" style="left:3.0px;top:252.0px" width="20" height="20" viewBox="-10 -10 20 20"><path d="M-8 8v-11c0-4 5-6.500 9-4.500l5 3.500v9l-4 3z" fill="#3a78f0" stroke="#0a1460" stroke-width=".8"/><path d="M-8 -3c0-4 5-6.500 9-4.500l5 3.500-4 2.500c-3-3-7-3-10-1.500z" fill="#28c8f0" stroke="#0a1460" stroke-width=".8"/><path d="M9 9.500v-4l-4 4z" fill="#8a8a8a"/></svg>
<svg class="abs" style="left:3.0px;top:275.5px" width="20" height="20" viewBox="-10 -10 20 20"><path d="M-8 -3.500l5.500-4h10.500l-5 4z" fill="#d9d9d9" stroke="#7a7a7a" stroke-width=".8"/><path d="M-8 -3.500h11v10.500h-11z" fill="#bdbdbd" stroke="#7a7a7a" stroke-width=".8"/><path d="M3 -3.500l5-4v10l-5 4.500z" fill="#8f8f8f" stroke="#7a7a7a" stroke-width=".8"/><circle cx="-2.500" cy="2" r="2.800" fill="#e9e9e9" stroke="#7a7a7a" stroke-width=".9"/></svg>
<svg class="abs" style="left:3.0px;top:298.0px" width="20" height="20" viewBox="-10 -10 20 20"><path d="M-8 5l3-3v-8l4-2h8v10l-4 3.500h-11z" fill="#c4c4c4" stroke="#7a7a7a" stroke-width=".9"/><path d="M-1 -4h5v6h-5z" fill="#efefef" stroke="#7a7a7a" stroke-width=".8"/></svg>
<svg class="abs" style="left:3.0px;top:323.0px" width="20" height="20" viewBox="-10 -10 20 20"><path d="M-8.500 7.500l5.500-13 5-2.500 6.500 11-4 4.500z" fill="#2a5af0" stroke="#0a1460" stroke-width=".8"/><path d="M-3 -5.500l5-2.500 6.500 11-4 4.500z" fill="#1228b0"/><path d="M-3 -5.500l5-2.500 1.500 3-5 2z" fill="#28c8f0"/></svg>
<svg class="abs" style="left:3.0px;top:346.0px" width="20" height="20" viewBox="-10 -10 20 20"><path d="M-8 -3.500l5.500-4h10.500l-5 4z" fill="#28c8f0" stroke="#0a1460" stroke-width=".8"/><path d="M-8 -3.500h11v10.500h-11z" fill="#3a78f0" stroke="#0a1460" stroke-width=".8"/><path d="M3 -3.500l5-4v10l-5 4.500z" fill="#1228b0" stroke="#0a1460" stroke-width=".8"/><rect x="-5.500" y="-0.500" width="6" height="5" fill="#28c8f0" stroke="#0a1460" stroke-width=".9"/><path d="M-4.500 2.500h4" stroke="#fff" stroke-width="1"/></svg>
<svg class="abs" style="left:3.0px;top:369.0px" width="20" height="20" viewBox="-10 -10 20 20"><path d="M-8 -1.500l4-3.500v-2.500l3.500-2h6.500v12l-4 3.500h-10z" fill="#bdbdbd" stroke="#808080" stroke-width=".9"/><path d="M-4 -5v9.500M0 -2v9" stroke="#8a8a8a" stroke-width=".9"/><path d="M9 9.500v-4l-4 4z" fill="#8a8a8a"/></svg>
<svg class="abs" style="left:3.0px;top:393.0px" width="20" height="20" viewBox="-10 -10 20 20"><path d="M-8 -3.500l5.500-4h10.500l-5 4z" fill="#28c8f0" stroke="#0a1460" stroke-width=".8"/><path d="M-8 -3.500h11v10.500h-11z" fill="#3a78f0" stroke="#0a1460" stroke-width=".8"/><path d="M3 -3.500l5-4v10l-5 4.500z" fill="#1228b0" stroke="#0a1460" stroke-width=".8"/><circle cx="-5" cy="-0.500" r="1.600" fill="#bfe6ff" stroke="#0a1460" stroke-width=".8"/><circle cx="-0.500" cy="-0.500" r="1.600" fill="#bfe6ff" stroke="#0a1460" stroke-width=".8"/><circle cx="-5" cy="4" r="1.600" fill="#bfe6ff" stroke="#0a1460" stroke-width=".8"/><circle cx="-0.500" cy="4" r="1.600" fill="#bfe6ff" stroke="#0a1460" stroke-width=".8"/><path d="M9 9.500v-4l-4 4z" fill="#8a8a8a"/></svg>
<svg class="abs" style="left:3.0px;top:415.5px" width="20" height="20" viewBox="-10 -10 20 20"><path d="M-8 -3.500l5.500-4h10.500l-5 4z" fill="#28c8f0" stroke="#0a1460" stroke-width=".8"/><path d="M-8 -3.500h11v10.500h-11z" fill="#3a78f0" stroke="#0a1460" stroke-width=".8"/><path d="M3 -3.500l5-4v10l-5 4.500z" fill="#1228b0" stroke="#0a1460" stroke-width=".8"/><path d="M-7 5l12-11M-6 -4l8 7" stroke="#e02030" stroke-width="1.500"/><path d="M9 9.500v-4l-4 4z" fill="#8a8a8a"/></svg>
<svg class="abs" style="left:3.0px;top:439.0px" width="20" height="20" viewBox="-10 -10 20 20"><path d="M-8 0l4-3h7v9l-4 3h-7z" fill="#3a78f0" stroke="#0a1460" stroke-width=".8"/><path d="M-8 0l4-3h7l-4 3z" fill="#28c8f0" stroke="#0a1460" stroke-width=".8"/><ellipse cx="4" cy="-3.500" rx="4.500" ry="3" transform="rotate(-35 4 -3.500)" fill="#bfeee0" stroke="#1a5a40" stroke-width="1"/><ellipse cx="4" cy="-3.500" rx="2" ry="1.200" transform="rotate(-35 4 -3.500)" fill="#fff" stroke="#1a5a40" stroke-width=".7"/></svg>
<div class="abs" style="left:0;top:462px;width:28px;height:15px;border-radius:0 0 9px 9px;background:linear-gradient(90deg,#e4e4e4 0,#b0b0b0 100%)"></div>
<svg class="abs" style="left:14px;top:465px" width="10" height="9" viewBox="0 0 10 9"><path d="M1.500 1v7" stroke="#222" stroke-width="1"/><path d="M2.500 1v7" stroke="#fff" stroke-width=".8"/><path d="M4.500 1l4 3.500-4 3.500z" fill="#222"/></svg>
</div>
<div id="panel">
<div class="abs" style="left:0;top:21px;width:1px;height:884px;background:#b9b9b9"></div><div class="abs" style="left:213px;top:21px;width:1px;height:884px;background:#b9b9b9"></div><div class="abs" style="left:214px;top:0;width:4px;height:905px;background:#f3f3f3"></div>
<div id="ptitle">Дерево модели</div>
<svg class="abs" style="left:180px;top:4px" width="32" height="13" viewBox="0 0 32 13"><path d="M4.5 2.5h4v5h-4z M3 7.5h7 M6.5 7.5v3.5" fill="none" stroke="#222" stroke-width="1.1"/><path d="M20 2.5l7 7M27 2.5l-7 7" stroke="#222" stroke-width="1.3"/></svg>
<div class="abs" style="left:0;top:21px;width:216px;height:27px;background:linear-gradient(180deg,#fff 0,#f7f7f7 50%,#e6e6e6 100%)"></div>
<svg class="abs" style="left:3.5px;top:24.5px" width="20" height="20" viewBox="-10 -10 20 20"><path d="M-6 -8v15h3M-6 -3.500h5M-1 -3.500v7M-1 0h3M-1 3.500h3" fill="none" stroke="#444" stroke-width="1"/><rect x="-7.500" y="-9.500" width="3" height="3" fill="#8a8a8a"/><rect x="1.500" y="-5" width="3" height="3" fill="#1a3a8a"/><rect x="1.500" y="-1.500" width="3" height="3" fill="#1a3a8a"/><rect x="1.500" y="2" width="3" height="3" fill="#1a3a8a"/><rect x="-3.500" y="5.500" width="3" height="3" fill="#8a8a8a"/></svg>
<svg class="abs" style="left:29.5px;top:24.5px" width="20" height="20" viewBox="-10 -10 20 20"><path d="M-7 -6.500v13M-7 -6h4M-7 -1.500h4M-7 3h4M-7 6.500h4" fill="none" stroke="#9a9a9a" stroke-width="1.100"/><path d="M-1 -6h7M-1 -1.500h7M-1 3h7" stroke="#b0b0b0" stroke-width="1.500" stroke-dasharray="2.500 1.200"/></svg>
<svg class="abs" style="left:53px;top:32px" width="8" height="5" viewBox="0 0 8 5"><path d="M0.500 0.500h7L4 4.500z" fill="#8a8a8a"/></svg>
<div class="sep" style="left:66.5px;top:25px;height:20px"></div>
<div class="abs" style="left:72px;top:23px;width:23px;height:24px;background:#c3ddf5;border:1px solid #6a9fd8"></div>
<svg class="abs" style="left:73.5px;top:24.5px" width="20" height="20" viewBox="-10 -10 20 20"><rect x="-5.500" y="-8.500" width="10.500" height="16" fill="#fff" stroke="#1a2a50" stroke-width="1.100"/><path d="M-5.500 1h10.500" stroke="#1a2a50" stroke-width="1"/><path d="M-3 -6v3h3M-3 -4.500h2" stroke="#3a5ad0" stroke-width=".9" fill="none"/><rect x="-0.500" y="-4" width="2.500" height="2" fill="#3a5ad0"/><path d="M-6 8.500h5" stroke="#111" stroke-width="1.800"/></svg>
<svg class="abs" style="left:96.5px;top:24.5px" width="20" height="20" viewBox="-10 -10 20 20"><path d="M-8 -7.500h7v14h-7z M-1 -5h6l2.500 2.500v10.500h-8.500z" fill="#e9e9e9" stroke="#9a9a9a" stroke-width="1"/><path d="M-6.500 -4.500h4M-6.500 -2h4M-6.500 0.500h4M0.500 0h5M0.500 2.500h5M0.500 5h5" stroke="#8a8a8a" stroke-width="1.100"/></svg>

<div id="tree"><div class="abs" style="left:15px;top:24px;width:1px;height:268px;background-image:linear-gradient(180deg,#9a9a9a 50%,transparent 50%);background-size:1px 2px"></div>
<div class="abs" style="left:16px;top:184px;width:13px;height:1px;background-image:linear-gradient(90deg,#9a9a9a 50%,transparent 50%);background-size:2px 1px"></div>
<div class="abs" style="left:16px;top:206px;width:13px;height:1px;background-image:linear-gradient(90deg,#9a9a9a 50%,transparent 50%);background-size:2px 1px"></div>
<div class="abs" style="left:16px;top:227px;width:13px;height:1px;background-image:linear-gradient(90deg,#9a9a9a 50%,transparent 50%);background-size:2px 1px"></div>
<div class="abs" style="left:16px;top:248px;width:13px;height:1px;background-image:linear-gradient(90deg,#9a9a9a 50%,transparent 50%);background-size:2px 1px"></div>
<div class="abs" style="left:16px;top:270px;width:13px;height:1px;background-image:linear-gradient(90deg,#9a9a9a 50%,transparent 50%);background-size:2px 1px"></div>
<div class="abs" style="left:16px;top:292px;width:13px;height:1px;background-image:linear-gradient(90deg,#9a9a9a 50%,transparent 50%);background-size:2px 1px"></div>
<div class="abs" style="left:21px;top:35px;width:8px;height:1px;background-image:linear-gradient(90deg,#9a9a9a 50%,transparent 50%);background-size:2px 1px"></div>
<div class="abs" style="left:40px;top:44px;width:1px;height:119px;background-image:linear-gradient(180deg,#9a9a9a 50%,transparent 50%);background-size:1px 2px"></div>
<div class="abs" style="left:41px;top:56px;width:14px;height:1px;background-image:linear-gradient(90deg,#9a9a9a 50%,transparent 50%);background-size:2px 1px"></div>
<div class="abs" style="left:41px;top:77px;width:14px;height:1px;background-image:linear-gradient(90deg,#9a9a9a 50%,transparent 50%);background-size:2px 1px"></div>
<div class="abs" style="left:41px;top:99px;width:14px;height:1px;background-image:linear-gradient(90deg,#9a9a9a 50%,transparent 50%);background-size:2px 1px"></div>
<div class="abs" style="left:41px;top:120px;width:14px;height:1px;background-image:linear-gradient(90deg,#9a9a9a 50%,transparent 50%);background-size:2px 1px"></div>
<div class="abs" style="left:41px;top:141px;width:14px;height:1px;background-image:linear-gradient(90deg,#9a9a9a 50%,transparent 50%);background-size:2px 1px"></div>
<div class="abs" style="left:41px;top:163px;width:14px;height:1px;background-image:linear-gradient(90deg,#9a9a9a 50%,transparent 50%);background-size:2px 1px"></div>
<svg class="abs" style="left:7.0px;top:3.3px" width="18" height="18" viewBox="-10 -10 20 20"><path d="M-9 -4l5-5.500 8 .500 5 6v6.500l-5.500 5.700h-12.500z" fill="#c8922a" stroke="#7a5200" stroke-width=".9"/><path d="M-9 -4l5-5.500 8 .500 5 6-4.500-1z" fill="#e6b43c"/><path d="M4.500 -4v13.200" stroke="#7a5200" stroke-width=".8"/><rect x="-9" y="-4" width="13.500" height="13.200" fill="#f7cf85" stroke="#7a5200" stroke-width=".9"/><circle cx="-2.600" cy="2.300" r="3.700" fill="#f8d548" stroke="#4a3000" stroke-width="1.100"/></svg>
<div class="tr" style="left:31.5px;top:1.5px">Деталь (Тел-1)</div>
<div class="abs" style="left:11px;top:30.5px;width:9px;height:9px;border:1px solid #9a9a9a;background:linear-gradient(180deg,#fff,#dcdcdc)"></div><div class="abs" style="left:13px;top:34.5px;width:5px;height:1px;background:#444"></div>
<svg class="abs" style="left:26.0px;top:24.0px" width="22" height="22" viewBox="-10 -10 20 20"><path d="M0.500 -9v11.500h11.500M0.500 2.500l-7 6" fill="none" stroke="#8a8a8a" stroke-width="1"/></svg>
<div class="tr" style="left:56.8px;top:23.1px">(т)Начало координат</div>
<svg class="abs" style="left:54.0px;top:46.0px" width="20" height="20" viewBox="-10 -10 20 20"><path d="M-6.500 -5l13 2v9.500l-13-2z" fill="#8f8f8f" stroke="#555" stroke-width=".8"/><path d="M-6.500 -0.200l13 2M-2 -4.300v9.500M2.500 -3.600v9.500" stroke="#b9b9b9" stroke-width=".9"/><path d="M-1.500 -8v3.500M-1.500 5v3.500M6.500 2.500h2" stroke="#777" stroke-width="1"/></svg>
<div class="tr" style="left:81.2px;top:44.5px">Плоскость XY</div>
<svg class="abs" style="left:54.0px;top:67.3px" width="20" height="20" viewBox="-10 -10 20 20"><path d="M-6.500 -5l13 2v9.500l-13-2z" fill="#8f8f8f" stroke="#555" stroke-width=".8"/><path d="M-6.500 -0.200l13 2M-2 -4.300v9.500M2.500 -3.600v9.500" stroke="#b9b9b9" stroke-width=".9"/><path d="M-1.500 -8v3.500M-1.500 5v3.500M6.500 2.500h2" stroke="#777" stroke-width="1"/></svg>
<div class="tr" style="left:81.2px;top:65.8px">Плоскость ZX</div>
<svg class="abs" style="left:54.0px;top:88.6px" width="20" height="20" viewBox="-10 -10 20 20"><path d="M-6.500 -5l13 2v9.500l-13-2z" fill="#8f8f8f" stroke="#555" stroke-width=".8"/><path d="M-6.500 -0.200l13 2M-2 -4.300v9.500M2.500 -3.600v9.500" stroke="#b9b9b9" stroke-width=".9"/><path d="M-1.500 -8v3.500M-1.500 5v3.500M6.500 2.500h2" stroke="#777" stroke-width="1"/></svg>
<div class="tr" style="left:81.2px;top:87.1px">Плоскость ZY</div>
<svg class="abs" style="left:54.0px;top:110.0px" width="20" height="20" viewBox="-10 -10 20 20"><path d="M-7.500 -7l5 4.500M-0.500 -0.700l1.500 1.400M3 2.600l5 4.500" stroke="#6a6a6a" stroke-width="1.800"/></svg>
<div class="tr" style="left:81.2px;top:108.5px">Ось X</div>
<svg class="abs" style="left:54.0px;top:131.3px" width="20" height="20" viewBox="-10 -10 20 20"><path d="M-7.500 -7l5 4.500M-0.500 -0.700l1.500 1.400M3 2.600l5 4.500" stroke="#6a6a6a" stroke-width="1.800"/></svg>
<div class="tr" style="left:81.2px;top:129.8px">Ось Y</div>
<svg class="abs" style="left:54.0px;top:152.6px" width="20" height="20" viewBox="-10 -10 20 20"><path d="M-7.500 -7l5 4.500M-0.500 -0.700l1.500 1.400M3 2.600l5 4.500" stroke="#6a6a6a" stroke-width="1.800"/></svg>
<div class="tr" style="left:81.2px;top:151.1px">Ось Z</div>
<svg class="abs" style="left:29.0px;top:174.0px" width="20" height="20" viewBox="-10 -10 20 20"><path d="M-5.500 -6.500h5.500v6h7v7h-12.500z" fill="#fff" stroke="#222" stroke-width="1.100"/><g fill="#333"><rect x="-7" y="-8" width="2.600" height="2.600"/><rect x="-1.300" y="-8" width="2.600" height="2.600"/><rect x="5.500" y="-2" width="2.600" height="2.600"/><rect x="5.500" y="5.200" width="2.600" height="2.600"/><rect x="-7" y="5.200" width="2.600" height="2.600"/></g></svg>
<div class="tr" style="left:56.8px;top:172.5px">Эскиз:1</div>
<svg class="abs" style="left:29.0px;top:195.5px" width="20" height="20" viewBox="-10 -10 20 20"><path d="M-7 -3.500l4.500-4h10.500l-4.500 4z" fill="#28c8f0" stroke="#0a1460" stroke-width=".8"/><path d="M-7 -3.500h10.500v10.500h-10.500z" fill="#3a78f0" stroke="#0a1460" stroke-width=".8"/><path d="M3.500 -3.500l4.500-4v10.500l-4.500 4z" fill="#1228b0" stroke="#0a1460" stroke-width=".8"/></svg>
<div class="tr" style="left:56.8px;top:194.0px">Операция выдавливания</div>
<svg class="abs" style="left:29.0px;top:217.0px" width="20" height="20" viewBox="-10 -10 20 20"><path d="M-5.500 -6.500h5.500v6h7v7h-12.500z" fill="#fff" stroke="#222" stroke-width="1.100"/><g fill="#333"><rect x="-7" y="-8" width="2.600" height="2.600"/><rect x="-1.300" y="-8" width="2.600" height="2.600"/><rect x="5.500" y="-2" width="2.600" height="2.600"/><rect x="5.500" y="5.200" width="2.600" height="2.600"/><rect x="-7" y="5.200" width="2.600" height="2.600"/></g></svg>
<div class="tr" style="left:56.8px;top:215.5px">Эскиз:2</div>
<svg class="abs" style="left:29.0px;top:238.5px" width="20" height="20" viewBox="-10 -10 20 20"><path d="M-7 -4l3.500-3.500h11.500l-3.500 3.500z" fill="#28c8f0" stroke="#0a1460" stroke-width=".8"/><path d="M-7 -4h11.500v11.500h-11.500z" fill="#2a5af0" stroke="#0a1460" stroke-width=".8"/><path d="M4.500 -4l3.500-3.500v11.500l-3.500 3.500z" fill="#1228b0" stroke="#0a1460" stroke-width=".8"/><rect x="-4.500" y="-1.500" width="6.500" height="6.500" fill="#dff2ff" stroke="#0a1460" stroke-width=".8"/><rect x="-3" y="2" width="3.500" height="2" fill="#2a5af0"/></svg>
<div class="tr" style="left:56.8px;top:237.0px;letter-spacing:-0.5px">Вырезать элемент выдав.</div>
<svg class="abs" style="left:29.0px;top:260.0px" width="20" height="20" viewBox="-10 -10 20 20"><path d="M-5.500 -6.500h5.500v6h7v7h-12.500z" fill="#fff" stroke="#222" stroke-width="1.100"/><g fill="#333"><rect x="-7" y="-8" width="2.600" height="2.600"/><rect x="-1.300" y="-8" width="2.600" height="2.600"/><rect x="5.500" y="-2" width="2.600" height="2.600"/><rect x="5.500" y="5.200" width="2.600" height="2.600"/><rect x="-7" y="5.200" width="2.600" height="2.600"/></g></svg>
<div class="tr" style="left:56.8px;top:258.5px">Эскиз:3</div>
<svg class="abs" style="left:29.0px;top:281.5px" width="20" height="20" viewBox="-10 -10 20 20"><path d="M-7 -4l3.500-3.500h11.500l-3.500 3.500z" fill="#28c8f0" stroke="#0a1460" stroke-width=".8"/><path d="M-7 -4h11.500v11.500h-11.500z" fill="#2a5af0" stroke="#0a1460" stroke-width=".8"/><path d="M4.500 -4l3.500-3.500v11.500l-3.500 3.500z" fill="#1228b0" stroke="#0a1460" stroke-width=".8"/><rect x="-4.500" y="-1.500" width="6.500" height="6.500" fill="#dff2ff" stroke="#0a1460" stroke-width=".8"/><rect x="-3" y="2" width="3.500" height="2" fill="#2a5af0"/></svg>
<div class="tr" style="left:56.8px;top:280.0px;letter-spacing:-0.5px">Вырезать элемент выдав.</div>
<div class="abs" style="left:10px;top:298.5px;width:184px;height:7px;border:1px solid #7d7d7d;border-radius:3px 4px 4px 3px;background:linear-gradient(180deg,#f6f6f6 0,#d2d2d2 40%,#8c8c8c 100%)"></div>
<div class="abs" style="left:0;top:563px;width:206px;height:17px;background:#f0f0f0"></div>
<div class="abs" style="left:20px;top:564px;width:127px;height:15px;background:#c9c9c9"></div>
<svg class="abs" style="left:5px;top:567px" width="10" height="11" viewBox="0 0 10 11"><path d="M7.300 2l-3.600 3.500 3.600 3.500" fill="none" stroke="#3c3c3c" stroke-width="2"/></svg>
<svg class="abs" style="left:189px;top:567px" width="10" height="11" viewBox="0 0 10 11"><path d="M2.700 2l3.600 3.500-3.600 3.500" fill="none" stroke="#3c3c3c" stroke-width="2"/></svg>
</div>
<div id="lower"></div>
<div class="abs" style="left:3px;top:883px;width:213px;height:22px;border-top:1px solid #8a8a8a;background:linear-gradient(180deg,#fafafa,#dedede)"></div>
<div class="abs" style="left:3px;top:882px;width:87px;height:22px;background:#f6f6f6;border-right:1px solid #555;border-bottom:1px solid #8a8a8a;font-size:13.2px;line-height:24px;padding-left:5px;color:#333">Построение</div>
</div>
<div id="vpb"></div><div id="vp"><svg class="abs" style="left:0;top:0" width="1259" height="904" viewBox="0 0 1259 904">
<g stroke="#181c22" stroke-width="1" stroke-linejoin="round">
<polygon fill="#939393" points="906.8,518.5 1018.7,471.2 923.9,426.4 915.6,429.9"/>
<polygon fill="#898989" points="645.8,180.8 813.0,256.8 804.0,356.8 872.9,387.9 868.7,424.3 740.6,367.0 748.5,286.4 639.3,236.0"/>
<polygon fill="#939393" points="645.8,180.8 694.0,159.3 862.5,237.0 813.0,256.8"/>
<polygon fill="#4e4e4e" points="813.0,256.8 862.5,237.0 854.0,336.0 804.0,356.8"/>
<polygon fill="#939393" points="804.0,356.8 854.0,336.0 921.2,368.0 872.9,387.9"/>
<polygon fill="#939393" points="739.5,386.8 740.6,367.0 868.7,424.3 804.8,452.5 807.2,418.0"/>
<polygon fill="#4e4e4e" points="759.2,438.2 807.2,418.0 804.8,452.5 868.7,424.3 872.9,387.9 921.2,368.0 906.8,518.5 1018.7,471.2 1012.5,558.7 621.2,731.6 629.5,641.0 743.0,592.0"/>
<polygon fill="#939393" points="532.2,231.4 580.6,210.0 748.5,286.4 699.3,307.9"/>
<polygon fill="#4e4e4e" points="699.3,307.9 748.5,286.4 739.5,386.8 690.6,406.6"/>
<polygon fill="#939393" points="690.6,406.6 739.5,386.8 807.2,418.0 759.2,438.2"/>
<polygon fill="#939393" points="453.5,298.5 501.4,277.7 525.6,287.5 521.2,329.8"/>
<polygon fill="#898989" points="453.5,298.5 521.2,329.8 532.2,231.4 699.3,307.9 690.6,406.6 759.2,438.2 743.0,592.0 437.9,452.2"/>
<polygon fill="#939393" points="323.9,502.7 437.9,452.2 743.0,592.0 629.5,641.0 534.8,598.9 565.6,583.7 451.4,532.5 419.1,545.5"/>
<polygon fill="#898989" points="323.9,502.7 419.1,545.5 411.4,635.2 315.0,592.0"/>
<polygon fill="#4e4e4e" points="419.1,545.5 451.4,532.5 444.1,622.2 411.4,635.2"/>
<polygon fill="#898989" points="451.4,532.5 565.6,583.7 534.8,598.9 528.5,659.8 444.1,622.2"/>
<polygon fill="#898989" points="534.8,598.9 629.5,641.0 621.2,731.6 526.4,687.9"/>
</g>
<g transform="translate(49.3,852.2)" font-family="Liberation Serif,serif" font-size="12"><path d="M0 0 L-19 -8" stroke="#2f9fe0" stroke-width="3"/><path d="M-27 -11.5 L-16 -11 L-18.5 -4.5z" fill="#2f9fe0"/><path d="M0 0 L-16 7" stroke="#c8141e" stroke-width="3"/><path d="M-23 10 L-12.5 10 L-15 3.5z" fill="#c8141e"/><path d="M0.5 1 L1.5 -17" stroke="#14c030" stroke-width="3"/><path d="M1.8 -26 L5.3 -15.5 L-2 -15.5z" fill="#14c030"/><text x="-3" y="-31" fill="#3fcf5a">Y</text><text x="-37" y="-8" fill="#4f9fe0">Z</text><text x="-32" y="17" fill="#e04a55">X</text></g>
</svg>
</div>
<div class="abs" style="left:1508px;top:82px;width:2px;height:904px;background:#f4f7fb"></div>
<div id="bottom"><div class="grip" style="left:1px;top:6px;height:60px"></div><div id="prop"></div></div>
<div id="status">Укажите новое положение точки<div class="abs" style="left:1397px;top:2px;width:1px;height:16px;background:#c9c9c9;box-shadow:1px 0 0 #fff"></div><div class="abs" style="left:1490px;top:2px;width:1px;height:16px;background:#c9c9c9;box-shadow:1px 0 0 #fff"></div><div class="abs" style="left:1498px;top:7px;width:10px;height:10px;background-image:radial-gradient(circle,#999 1px,transparent 1.2px);background-size:3.3px 3.3px;clip-path:polygon(100% 0,100% 100%,0 100%)"></div></div>
</div>
<div id="viewer">
<div class="abs" style="left:7px;top:0;width:78px;height:2px;background:#8fb6dd"></div>
<div id="paper">
<svg class="abs" style="left:0;top:0" width="397" height="541.5" viewBox="1517 7 397 541.5">
<defs><filter id="pb" x="-2%" y="-2%" width="104%" height="104%"><feGaussianBlur stdDeviation="0.45"/></filter></defs>
<g filter="url(#pb)">
<g fill="none" stroke="#0a0a0a" stroke-width="3.7" stroke-linejoin="miter" stroke-linecap="square">
<polyline points="1647.6,78.6 1641.5,75.3 1622.5,85.0 1647.4,100.2 1647.8,66.7 1707.8,100.4 1725.6,92.0 1664.4,56.7 1647.8,66.7"/>
<polyline points="1622.5,85.0 1622.2,143.8 1733.6,206.0 1733.9,150.6"/>
<polyline points="1707.8,100.4 1707.8,134.4 1725.6,125.6 1752.2,140.6 1733.9,150.6 1707.8,134.4"/>
<polyline points="1725.6,92.0 1725.6,125.6"/>
<polyline points="1752.2,140.6 1754.2,155.6"/>
<polyline points="1725.6,108.5 1784.4,141.1 1755.5,155.8"/>
<polyline points="1697.2,49.4 1691.1,46.1 1674.4,55.6 1697.8,70.0 1697.8,37.8 1757.8,72.2 1775.6,63.3 1716.7,26.7 1697.8,37.8"/>
<polyline points="1757.8,72.2 1757.8,105.3 1784.6,121.4 1802.5,113.0 1775.6,97.8 1757.8,105.3"/>
<polyline points="1775.6,63.3 1775.6,97.8"/>
<polyline points="1784.6,121.4 1784.4,141.1"/>
<polyline points="1802.5,113.0 1804.2,166.7 1854.2,141.7 1817.8,117.5 1804.4,125.6"/>
<polyline points="1854.2,141.7 1854.2,172.2"/>
<polyline points="1622.2,143.8 1573.9,171.1 1573.9,203.3 1608.9,223.3 1608.9,191.1 1573.9,171.1"/>
<polyline points="1608.9,191.1 1624.4,183.3 1624.4,214.4 1608.9,223.3"/>
<polyline points="1624.4,183.3 1665.0,206.1 1648.9,215.6 1648.9,247.8 1683.4,266.7 1683.4,233.3 1648.9,215.6"/>
<polyline points="1624.4,214.4 1648.3,227.8"/>
<polyline points="1683.4,233.3 1733.6,206.0"/>
<polyline points="1683.4,266.7 1854.2,172.2"/>
<polyline points="1628.1,314.4 1682.9,283.2 1709.3,297.8 1653.1,329.0 1628.1,314.4 1584.4,420.6"/>
<polyline points="1653.1,329.0 1637.1,372.1 1655.8,381.8 1743.3,336.7"/>
<polyline points="1709.3,297.8 1723.9,320.7 1746.1,335.3"/>
<polyline points="1637.1,372.1 1723.9,320.7"/>
<polyline points="1655.8,381.8 1641.4,419.2 1656.7,427.5 1672.5,392.9 1690.6,405.4 1709.9,362.0 1739.5,378.2 1794.7,348.3 1765.7,330.7 1709.9,362.0"/>
<polyline points="1641.4,419.2 1665.6,403.3"/>
<polyline points="1672.5,392.9 1705.0,373.5"/>
<polyline points="1739.5,378.2 1695.6,481.7"/>
<polyline points="1794.7,348.3 1816.1,376.5 1849.7,396.4 1849.7,430.8"/>
<polyline points="1816.1,376.5 1834.5,403.3 1849.7,396.4"/>
<polyline points="1584.4,420.6 1571.9,427.5 1571.9,459.4 1681.7,519.9 1681.7,490.0 1571.9,427.5"/>
<polyline points="1584.4,420.6 1695.6,481.7 1681.7,490.0"/>
<polyline points="1681.7,519.9 1772.5,472.6"/>
<polyline points="1779.4,468.4 1849.7,430.8"/>
<path d="M1833.3 279 L1790 252.4" stroke-width="2.6" stroke-linecap="butt"/><path d="M1856.3 524.8 L1813.5 498.2" stroke-width="2.6" stroke-linecap="butt"/>
</g>
<path fill="#0a0a0a" d="M1783.2 248.3 L1800.5 251.5 L1794 255.2 L1793 263.5z M1806.9 494.1 L1824.2 497.3 L1817.7 501 L1816.7 509.3z"/>
<g fill="none" stroke="#111" stroke-width="1.25">
<polyline points="1573.9,171.1 1552.8,158.9"/>
<polyline points="1624.4,183.3 1567.2,148.9"/>
<polyline points="1532.8,177.8 1556.1,165.6"/>
<polyline points="1607.2,135.0 1580.6,150.0"/>
<polyline points="1573.9,203.3 1525.6,231.7"/>
<polyline points="1532.8,227.8 1642.8,291.1"/>
<polyline points="1683.4,266.7 1630.6,298.9"/>
<polyline points="1608.9,223.3 1586.1,236.7"/>
<polyline points="1592.8,235.0 1630.6,256.7"/>
<polyline points="1648.9,247.8 1621.1,262.8"/>
<polyline points="1690.6,91.0 1690.6,181.5"/>
<polyline points="1721.7,146.7 1721.7,198.0"/>
<polyline points="1746.1,70.0 1746.1,116.7"/>
<polyline points="1753.9,155.6 1753.9,184.4"/>
<polyline points="1785.0,142.2 1785.0,165.6"/>
<polyline points="1754.4,177.8 1783.6,163.3"/>
<polyline points="1733.6,206.0 1733.1,230.6"/>
<polyline points="1804.2,166.7 1803.3,192.2"/>
<polyline points="1734.9,223.3 1802.6,187.2"/>
<polyline points="1683.4,266.7 1713.3,284.7"/>
<polyline points="1854.2,172.2 1879.4,187.2"/>
<polyline points="1705.1,277.5 1871.3,185.4"/>
<polyline points="1712.4,221.5 1712.4,249.5"/>
<polyline points="1716.7,26.7 1735.6,14.4"/>
<polyline points="1775.6,63.3 1800.0,48.9"/>
<polyline points="1732.2,19.4 1790.0,53.9"/>
<polyline points="1685.7,315.8 1685.7,342.2"/>
<polyline points="1708.8,297.4 1735.8,282.9"/>
<polyline points="1764.7,329.9 1787.3,317.2"/>
<polyline points="1726.8,290.1 1779.2,319.9"/>
<polyline points="1795.4,347.9 1900.2,288.3"/>
<polyline points="1849.7,430.8 1902.4,403.3"/>
<polyline points="1892.3,293.0 1892.3,408.0"/>
<polyline points="1849.7,396.4 1873.4,382.6"/>
<polyline points="1868.8,387.2 1868.8,419.3"/>
<polyline points="1740.5,378.8 1740.5,415.5"/>
<polyline points="1795.5,348.3 1795.5,387.2"/>
<polyline points="1742.0,405.6 1794.7,377.3"/>
<polyline points="1697.0,481.7 1697.0,505.3"/>
<polyline points="1834.5,403.3 1834.5,431.5"/>
<polyline points="1698.0,497.0 1832.9,424.7"/>
<polyline points="1681.5,521.9 1715.6,541.1"/>
<polyline points="1849.7,430.8 1882.6,449.1"/>
<polyline points="1705.2,534.4 1871.1,445.6"/>
<polyline points="1571.9,459.4 1539.3,478.2"/>
<polyline points="1681.7,519.9 1648.3,540.0"/>
<polyline points="1549.0,473.3 1655.3,535.8"/>
<polyline points="1612.2,420.6 1685.1,461.5"/>
<polyline points="1648.3,401.1 1630.3,437.2"/>
<polyline points="1667.8,402.5 1649.7,448.3"/>
<polyline points="1661.0,383.0 1662.4,401.5"/>
</g>
<g fill="#0a0a0a">
<polygon points="1556.1,165.6 1544.7,174.0 1542.7,170.1"/>
<polygon points="1580.6,150.0 1591.7,141.2 1593.9,145.0"/>
<polygon points="1532.8,227.8 1546.0,232.9 1543.8,236.7"/>
<polygon points="1642.8,291.1 1629.6,286.0 1631.8,282.2"/>
<polygon points="1592.8,235.0 1606.0,240.1 1603.8,243.9"/>
<polygon points="1630.6,256.7 1617.4,251.6 1619.6,247.8"/>
<polygon points="1690.6,91.0 1692.8,105.0 1688.4,105.0"/>
<polygon points="1690.6,181.5 1688.4,167.5 1692.8,167.5"/>
<polygon points="1721.7,146.7 1723.9,160.7 1719.5,160.7"/>
<polygon points="1721.7,198.0 1719.5,184.0 1723.9,184.0"/>
<polygon points="1746.1,70.0 1748.3,84.0 1743.9,84.0"/>
<polygon points="1746.1,116.7 1743.9,102.7 1748.3,102.7"/>
<polygon points="1754.4,177.8 1766.0,169.6 1767.9,173.5"/>
<polygon points="1783.6,163.3 1772.0,171.5 1770.1,167.6"/>
<polygon points="1734.9,223.3 1746.2,214.8 1748.3,218.7"/>
<polygon points="1802.6,187.2 1791.3,195.7 1789.2,191.8"/>
<polygon points="1705.1,277.5 1716.3,268.8 1718.4,272.6"/>
<polygon points="1871.3,185.4 1860.1,194.1 1858.0,190.3"/>
<polygon points="1712.4,221.5 1714.6,235.5 1710.2,235.5"/>
<polygon points="1712.4,249.5 1710.2,235.5 1714.6,235.5"/>
<polygon points="1732.2,19.4 1745.3,24.7 1743.1,28.5"/>
<polygon points="1790.0,53.9 1776.9,48.6 1779.1,44.8"/>
<polygon points="1685.7,315.8 1687.9,329.8 1683.5,329.8"/>
<polygon points="1685.7,342.2 1683.5,328.2 1687.9,328.2"/>
<polygon points="1726.8,290.1 1740.1,295.1 1737.9,298.9"/>
<polygon points="1779.2,319.9 1765.9,314.9 1768.1,311.1"/>
<polygon points="1892.3,293.0 1894.5,307.0 1890.1,307.0"/>
<polygon points="1892.3,408.0 1890.1,394.0 1894.5,394.0"/>
<polygon points="1868.8,387.2 1871.0,401.2 1866.6,401.2"/>
<polygon points="1868.8,419.3 1866.6,405.3 1871.0,405.3"/>
<polygon points="1742.0,405.6 1753.3,397.0 1755.4,400.9"/>
<polygon points="1794.7,377.3 1783.4,385.9 1781.3,382.0"/>
<polygon points="1698.0,497.0 1709.3,488.4 1711.4,492.3"/>
<polygon points="1832.9,424.7 1821.6,433.3 1819.5,429.4"/>
<polygon points="1705.2,534.4 1716.5,525.9 1718.6,529.7"/>
<polygon points="1871.1,445.6 1859.8,454.1 1857.7,450.3"/>
<polygon points="1549.0,473.3 1562.2,478.5 1560.0,482.3"/>
<polygon points="1655.3,535.8 1642.1,530.6 1644.3,526.8"/>
<polygon points="1632.2,431.8 1618.9,426.9 1621.1,423.0"/>
<polygon points="1651.6,442.7 1664.9,447.6 1662.7,451.5"/>
<polygon points="1661.0,383.0 1663.2,390.9 1660.0,391.1"/>
<polygon points="1662.4,401.5 1660.2,393.6 1663.4,393.4"/>
</g>
<g font-family="Liberation Sans,sans-serif" font-style="italic" fill="#0a0a0a" stroke="#0a0a0a" stroke-width="0.35" text-anchor="middle">
<text transform="translate(1559,151) rotate(-28) scale(0.88,1)" font-size="17" y="6.1">5</text>
<text transform="translate(1594,250) rotate(30) scale(0.88,1)" font-size="17" y="6.1">40</text>
<text transform="translate(1625.5,238) rotate(30) scale(0.88,1)" font-size="17" y="6.1">15</text>
<text transform="translate(1680,133) rotate(-90) scale(0.88,1)" font-size="17" y="6.1">28</text>
<text transform="translate(1710,166) rotate(-90) scale(0.88,1)" font-size="17" y="6.1">17</text>
<text transform="translate(1735.8,82) rotate(-90) scale(0.88,1)" font-size="17" y="6.1">15</text>
<text transform="translate(1770,159) rotate(-27) scale(0.88,1)" font-size="16" y="5.8">10</text>
<text transform="translate(1767,195.5) rotate(-28) scale(0.88,1)" font-size="17" y="6.1">25</text>
<text transform="translate(1784.6,223.3) rotate(-28) scale(0.88,1)" font-size="17" y="6.1">60</text>
<text transform="translate(1701,240.5) rotate(-62) scale(0.88,1)" font-size="14" y="5.0">10</text>
<text transform="translate(1767,28) rotate(30) scale(0.88,1)" font-size="17" y="6.1">22</text>
<text transform="translate(1673.5,333.9) rotate(-62) scale(0.88,1)" font-size="14" y="5.0">10</text>
<text transform="translate(1760.5,299.2) rotate(30) scale(0.88,1)" font-size="17" y="6.1">20</text>
<text transform="translate(1882,350) rotate(-90) scale(0.88,1)" font-size="17" y="6.1">35</text>
<text transform="translate(1859.5,406.3) rotate(-75) scale(0.88,1)" font-size="14" y="5.0">10</text>
<text transform="translate(1766,382.6) rotate(-28) scale(0.88,1)" font-size="17" y="6.1">20</text>
<text transform="translate(1772.6,447) rotate(-28) scale(0.88,1)" font-size="17" y="6.1">50</text>
<text transform="translate(1771.9,489.5) rotate(-28) scale(0.88,1)" font-size="17" y="6.1">60</text>
<text transform="translate(1610,496.5) rotate(30) scale(0.88,1)" font-size="17" y="6.1">40</text>
<text transform="translate(1668,439.3) rotate(-28) scale(0.88,1)" font-size="17" y="6.1">5</text>
<text transform="translate(1819,248) scale(0.9,1)" font-size="23" y="8">A</text>
<text transform="translate(1846,494) scale(0.9,1)" font-size="23" y="8">A</text>
</g>
<text x="1536.5" y="47" font-family="Liberation Sans,sans-serif" font-weight="bold" font-size="25" fill="#0a0a0a">4</text>
</g>
</svg>
</div>
<div class="abs" style="left:0;top:577px;width:410px;height:5px;background:#212121"></div>
<div class="abs" style="left:239px;top:552px;width:65px;height:26px;border-radius:4px;background:#2b2b2b"></div>
<svg class="abs" style="left:7.3px;top:555.5px" width="20" height="20" viewBox="-10 -10 20 20"><rect x="-6.300" y="-5" width="12.600" height="10.300" rx="1.800" fill="none" stroke="#f2f2f2" stroke-width="1.500"/><rect x="-6" y="1.300" width="12" height="3.600" fill="#f2f2f2"/><path d="M-4.500 3.200h9.500" stroke="#1c1c1c" stroke-width="1" stroke-dasharray="1 1.300"/></svg>
<div class="abs" style="left:35.500px;top:555px;width:1px;height:21px;background:#333"></div>
<svg class="abs" style="left:44.0px;top:556.0px" width="20" height="20" viewBox="-10 -10 20 20"><path d="M0 5.800l-5.600-5.400c-2.400-2.400-.3-5.800 2.300-5.800 1.500 0 2.700.900 3.300 2.200.600-1.300 1.800-2.200 3.300-2.200 2.600 0 4.700 3.400 2.300 5.800z" fill="none" stroke="#7d7d7d" stroke-width="1.500"/></svg>
<svg class="abs" style="left:78.2px;top:555.4px" width="20" height="20" viewBox="-10 -10 20 20"><circle r="6.200" fill="none" stroke="#f2f2f2" stroke-width="1.500"/><path d="M0 -1v4.300" stroke="#f2f2f2" stroke-width="1.700"/><circle cy="-3.300" r="1" fill="#f2f2f2"/></svg>
<svg class="abs" style="left:146.2px;top:556.9px" width="17.5" height="17.5" viewBox="-10 -10 20 20"><path d="M-6 -2.500v-3.500h3.500M2.500 -6h3.500v3.500M6 2.500v3.500h-3.500M-2.500 6h-3.500v-3.500" fill="none" stroke="#f2f2f2" stroke-width="1.500"/><circle r="1.700" fill="none" stroke="#f2f2f2" stroke-width="1.300"/></svg>
<svg class="abs" style="left:210.0px;top:555.6px" width="20" height="20" viewBox="-10 -10 20 20"><rect x="-7" y="-5" width="14" height="10.500" fill="#f2f2f2"/><rect x="-5" y="-3.200" width="10" height="6.800" rx="3" fill="#1c1c1c"/><circle r="2.400" fill="#f2f2f2"/><circle cx="-5.500" cy="-3.600" r=".700" fill="#1c1c1c"/></svg>
<div class="abs" style="left:248px;top:558px;font-size:11px;line-height:15px;color:#f2f2f2;letter-spacing:.1px">84 %</div>
<svg class="abs" style="left:278.2px;top:555.3px" width="20" height="20" viewBox="-10 -10 20 20"><path d="M-3.500 -1.500l3.500 3.300 3.500-3.300" fill="none" stroke="#bdbdbd" stroke-width="1.300"/></svg>
<svg class="abs" style="left:313.0px;top:556.6px" width="18" height="18" viewBox="-10 -10 20 20"><circle cx="-1.200" cy="-1.200" r="4.600" fill="none" stroke="#f2f2f2" stroke-width="1.400"/><path d="M2.200 2.200l4.300 4.300" stroke="#f2f2f2" stroke-width="1.500"/><path d="M-3.500 -1.200h4.600" stroke="#f2f2f2" stroke-width="1.300"/></svg>
<svg class="abs" style="left:347.0px;top:556.6px" width="18" height="18" viewBox="-10 -10 20 20"><circle cx="-1.200" cy="-1.200" r="4.600" fill="none" stroke="#f2f2f2" stroke-width="1.400"/><path d="M2.200 2.200l4.300 4.300" stroke="#f2f2f2" stroke-width="1.500"/><path d="M-3.500 -1.200h4.600M-1.200 -3.500v4.600" stroke="#f2f2f2" stroke-width="1.300"/></svg>
<div class="abs" style="left:375px;top:555px;width:1px;height:21px;background:#333"></div>
<svg class="abs" style="left:385.5px;top:557.1px" width="17" height="17" viewBox="-10 -10 20 20"><path d="M-5.500 5.500l11-11" stroke="#f2f2f2" stroke-width="1.400"/><path d="M1 -6h5v5M-1 6h-5v-5" fill="none" stroke="#f2f2f2" stroke-width="1.400"/></svg>

</div>
</body>
</html>
